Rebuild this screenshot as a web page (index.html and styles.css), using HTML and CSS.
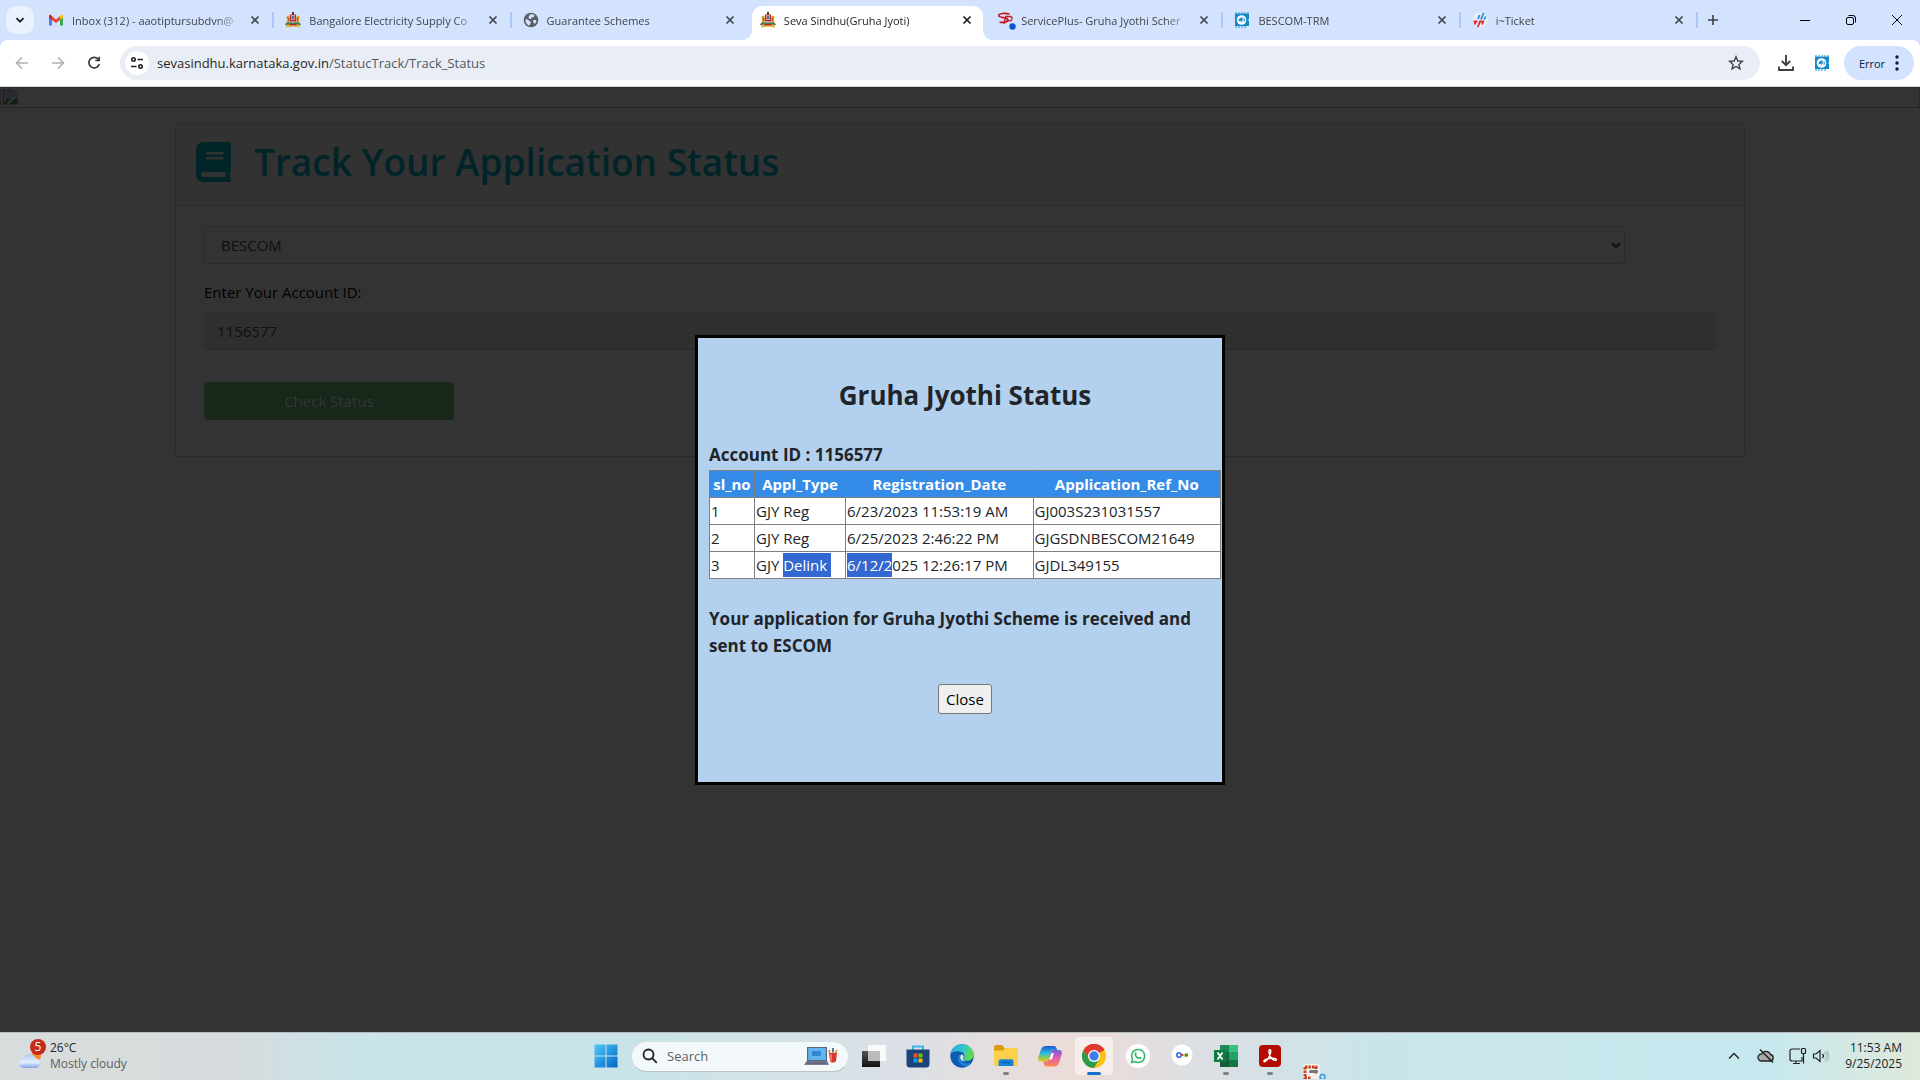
FILE: index.html
```html
<!DOCTYPE html>
<html lang="en">
<head>
    <meta charset="UTF-8">
    <meta name="viewport" content="width=device-width, initial-scale=1">
    <title>Seva Sindhu(Gruha Jyoti)</title>
    <link rel="stylesheet" href="styles.css">
</head>
<body>
    <!-- shared icons -->
    <svg class="sprite" aria-hidden="true">
        <symbol id="i-x" viewBox="0 0 10 10"><path d="M1.5 1.5l7 7M8.5 1.5l-7 7" stroke="currentColor" stroke-width="1.7" fill="none"/></symbol>
        <symbol id="i-emblem" viewBox="0 0 16 16">
            <path d="M7 0h2v3H7z" fill="#4a3a28"/>
            <path d="M5 2.5h6l.6 7H4.400z" fill="#c3272b"/>
            <path d="M6.500 3h3v5h-3z" fill="#f4ead2"/>
            <path d="M7.200 3.500h1.600v4H7.200z" fill="#31509a"/>
            <path d="M1.500 4.500l2-1 1.300 2-.5 5-3 .5.8-3z" fill="#e0a72c"/>
            <path d="M14.500 4.500l-2-1-1.300 2 .5 5 3 .5-.8-3z" fill="#e0a72c"/>
            <path d="M2.300 5.500l1.500.8-.5 3M13.700 5.500l-1.500.8.500 3" stroke="#9c3b1d" stroke-width=".8" fill="none"/>
            <path d="M0 12.500c2-3 4.500-2 8-2s6 -1 8 2l-2 1.500H2z" fill="#4c7a54"/>
            <path d="M2 12.500h12l1 3.200c-4-1.200-10-1.200-14 0z" fill="#e2b23c"/>
            <path d="M4.500 12h7v1.300h-7z" fill="#b52a26"/>
        </symbol>
        <symbol id="i-bescom" viewBox="0 0 16 16">
            <path d="M1 1.500h14v12.500H1z" fill="#1489c9"/>
            <path d="M2 0v2M5 0v2M8 0v2M11 0v2M14 0v2M2 14v2M5 14v2M8 14v2M11 14v2" stroke="#58b3de" stroke-width="1.400"/>
            <circle cx="7.500" cy="8" r="4.800" fill="#fff"/>
            <path d="M4.500 9.500c0-3 2-4.500 4.500-4l-1 2h1.500l-3 3.500.6-2.500zM9.700 5.500c1.500 1 1.500 3.500 0 5" fill="#1489c9"/>
            <path d="M16 6.500v3l-2-1.500z" fill="#fff"/>
        </symbol>
    </svg>

    <header class="browser">
        <div class="tabstrip">
            <button class="tab-search" aria-label="Search tabs"><svg width="12" height="12" viewBox="0 0 12 12"><path d="M2.500 4.200L6 7.700l3.500-3.500" stroke="#1f1f1f" stroke-width="1.800" fill="none"/></svg></button>
            <div class="tabs">
                <div class="tab">
                    <svg class="favicon" viewBox="0 0 16 16"><path d="M1 4v9.500h3V7z" fill="#4285f4"/><path d="M15 4v9.500h-3V7z" fill="#34a853"/><path d="M12 4.500L13 3c1-.8 2-.2 2 1v1.500L12 8z" fill="#fbbc04"/><path d="M4 4.500L3 3C2 2.200 1 2.800 1 4v1.500L4 8z" fill="#c5221f"/><path d="M4 4.300l4 3.200 4-3.200V8l-4 3-4-3z" fill="#ea4335"/></svg>
                    <span class="tab-title">Inbox (312) - aaotiptursubdvn@</span>
                    <button class="tab-close" aria-label="Close tab"><svg><use href="#i-x"/></svg></button>
                </div>
                <div class="tab">
                    <svg class="favicon"><use href="#i-emblem"/></svg>
                    <span class="tab-title">Bangalore Electricity Supply Co</span>
                    <button class="tab-close" aria-label="Close tab"><svg><use href="#i-x"/></svg></button>
                </div>
                <div class="tab no-line">
                    <svg class="favicon" viewBox="0 0 16 16"><circle cx="8" cy="8" r="7.300" fill="#5b6066"/><path d="M2.500 7.500c1-.5 2.500 0 3.500 1s1.800.8 1.800 2-1 1-1 3c-2.800-.6-4.600-3-4.300-6zM7 2.500c1.500-.6 3.500-.3 4.700 1l-1.200 1.700-2 .3-.5 1.600-1.800-.3L5.500 5zM10 8.300l2.300-.6 1.300 1.500-1.500 2.600-1.600-.8z" fill="#d3e2fd"/></svg>
                    <span class="tab-title">Guarantee Schemes</span>
                    <button class="tab-close" aria-label="Close tab"><svg><use href="#i-x"/></svg></button>
                </div>
                <div class="tab active">
                    <svg class="favicon"><use href="#i-emblem"/></svg>
                    <span class="tab-title">Seva Sindhu(Gruha Jyoti)</span>
                    <button class="tab-close" aria-label="Close tab"><svg><use href="#i-x"/></svg></button>
                </div>
                <div class="tab">
                    <svg class="favicon loading" viewBox="0 0 16 16"><path d="M12.500 2C8 .8 1.500 1.200 1.700 3.800c.2 2.400 9.300 1.200 9.300 4.200 0 2-4 2.800-8.500 2.200" stroke="#c9141e" stroke-width="1.600" fill="none"/><path d="M7 12l1.700-7.500h4.500c2.700 0 2.500 4-.5 4.300H9.500" stroke="#c9141e" stroke-width="1.300" fill="none"/><circle cx="15.500" cy="14.500" r="3.200" fill="#0b57d0"/></svg>
                    <span class="tab-title">ServicePlus- Gruha Jyothi Scher</span>
                    <button class="tab-close" aria-label="Close tab"><svg><use href="#i-x"/></svg></button>
                </div>
                <div class="tab">
                    <svg class="favicon"><use href="#i-bescom"/></svg>
                    <span class="tab-title">BESCOM-TRM</span>
                    <button class="tab-close" aria-label="Close tab"><svg><use href="#i-x"/></svg></button>
                </div>
                <div class="tab">
                    <svg class="favicon" viewBox="0 0 16 16"><circle cx="8" cy="8" r="7.500" fill="#eaf0fa"/><path d="M7.500 3L6 7M11.500 1L9 7.500M13.500 4.500L12.300 7.500" stroke="#2e8fd0" stroke-width="1.900"/><path d="M4.200 9L2.500 12.500M8.200 9L5.800 15M11.500 9L10 12.500M1.500 9.500h4M7 9.500h5" stroke="#dc2f34" stroke-width="1.900"/></svg>
                    <span class="tab-title">i~Ticket</span>
                    <button class="tab-close" aria-label="Close tab"><svg><use href="#i-x"/></svg></button>
                </div>
            </div>
            <button class="new-tab" aria-label="New tab"><svg width="12" height="12" viewBox="0 0 12 12"><path d="M6 1v10M1 6h10" stroke="#3c4043" stroke-width="1.600"/></svg></button>
            <div class="window-buttons">
                <button aria-label="Minimize"><svg width="12" height="12" viewBox="0 0 12 12"><path d="M1 6.500h10" stroke="#000"/></svg></button>
                <button aria-label="Restore"><svg width="12" height="12" viewBox="0 0 12 12" fill="none" stroke="#000"><rect x="1.500" y="3.500" width="7" height="7" rx="1.500"/><path d="M3.500 1.500h4.500a2.500 2.500 0 0 1 2.500 2.500v4.500"/></svg></button>
                <button aria-label="Close"><svg width="12" height="12" viewBox="0 0 12 12"><path d="M1 1l10 10M11 1L1 11" stroke="#000"/></svg></button>
            </div>
        </div>
        <div class="toolbar">
            <button class="tool" aria-label="Back"><svg width="16" height="16" viewBox="0 0 16 16" fill="none" stroke="#b0b3b6" stroke-width="1.600"><path d="M14 8H3M8 2.500L2.500 8 8 13.500"/></svg></button>
            <button class="tool" aria-label="Forward"><svg width="16" height="16" viewBox="0 0 16 16" fill="none" stroke="#b0b3b6" stroke-width="1.600"><path d="M2 8h11M8 2.500L13.500 8 8 13.500"/></svg></button>
            <button class="tool" aria-label="Reload"><svg width="16" height="16" viewBox="0 0 16 16" fill="none" stroke="#3c4043" stroke-width="1.700"><path d="M12.500 4.500A5.300 5.300 0 1 0 13.300 9M13.200 1.800v3.700H9.300"/></svg></button>
            <div class="omnibox">
                <button class="site-info" aria-label="View site information"><svg width="14" height="14" viewBox="0 0 14 14" fill="none" stroke="#1f1f1f" stroke-width="1.600"><circle cx="3.500" cy="3.500" r="1.700"/><path d="M7.500 3.500H13M1 10.500h5.500"/><circle cx="10.500" cy="10.500" r="1.700"/></svg></button>
                <a class="url" href="#">sevasindhu.karnataka.gov.in<span>/StatucTrack/Track_Status</span></a>
                <button class="star" aria-label="Bookmark this tab"><svg width="16" height="16" viewBox="0 0 16 16"><path d="M8 1.800l1.800 4.200 4.500.4-3.400 3 1 4.400L8 11.500l-3.900 2.300 1-4.400-3.400-3L6.200 6z" fill="none" stroke="#3c4043" stroke-width="1.400"/></svg></button>
            </div>
            <button class="tool" aria-label="Downloads"><svg width="18" height="18" viewBox="0 0 18 18" fill="none" stroke="#3c4043" stroke-width="1.900"><path d="M9 1v10M4.800 7L9 11.200 13.200 7M2 12.500V16h14v-3.500"/></svg></button>
            <button class="tool" aria-label="BESCOM extension"><svg width="16" height="16"><use href="#i-bescom"/></svg></button>
            <button class="error-pill">Error <svg width="4" height="16" viewBox="0 0 4 16" fill="#041e49"><circle cx="2" cy="2" r="1.700"/><circle cx="2" cy="8" r="1.700"/><circle cx="2" cy="14" r="1.700"/></svg></button>
        </div>
    </header>

    <main class="page">
        <div class="banner">
            <svg width="16" height="16" viewBox="0 0 16 16"><path d="M1 1h10l4 4v10H1z" fill="#c5d9f5" stroke="#8b8b8b"/><path d="M1 15l5-6 4 3 5-5v8z" fill="#46a049"/><path d="M5 15.500L15.500 6" stroke="#fff" stroke-width="2"/></svg>
        </div>
        <section class="card">
            <div class="card-header">
                <svg class="book" viewBox="0 0 448 512"><path fill="currentColor" d="M448 360V24c0-13.300-10.700-24-24-24H96C43 0 0 43 0 96v320c0 53 43 96 96 96h328c13.300 0 24-10.700 24-24v-16c0-7.500-3.500-14.300-8.900-18.700-4.200-15.400-4.200-59.300 0-74.700 5.400-4.300 8.900-11.100 8.900-18.600zM128 134c0-3.300 2.700-6 6-6h212c3.300 0 6 2.700 6 6v20c0 3.300-2.700 6-6 6H134c-3.300 0-6-2.700-6-6v-20zm0 64c0-3.300 2.700-6 6-6h212c3.300 0 6 2.700 6 6v20c0 3.300-2.700 6-6 6H134c-3.300 0-6-2.700-6-6v-20zm253.400 250H96c-17.700 0-32-14.300-32-32 0-17.600 14.400-32 32-32h285.400c-1.900 17.100-1.900 46.900 0 64z"/></svg>
                <h1>Track Your Application Status</h1>
            </div>
            <form class="card-body">
                <select class="form-control escom" aria-label="ESCOM">
                    <option>BESCOM</option>
                </select>
                <label for="account">Enter Your Account ID:</label>
                <input class="form-control" id="account" type="text" value="1156577" readonly>
                <button class="btn-check" type="button">Check Status</button>
            </form>
        </section>

        <div class="overlay">
            <div class="modal" role="dialog" aria-labelledby="modal-title">
                <h2 id="modal-title">Gruha Jyothi Status</h2>
                <p class="account">Account ID : 1156577</p>
                <table class="status">
                    <thead>
                        <tr><th class="col-no">sl_no</th><th class="col-type">Appl_Type</th><th>Registration_Date</th><th>Application_Ref_No</th></tr>
                    </thead>
                    <tbody>
                        <tr><td>1</td><td>GJY Reg</td><td>6/23/2023 11:53:19 AM</td><td>GJ003S231031557</td></tr>
                        <tr><td>2</td><td>GJY Reg</td><td>6/25/2023 2:46:22 PM</td><td>GJGSDNBESCOM21649</td></tr>
                        <tr><td>3</td><td>GJY <span class="selected">Delink&nbsp;</span></td><td><span class="selected">6/12/2</span>025 12:26:17 PM</td><td>GJDL349155</td></tr>
                    </tbody>
                </table>
                <p class="message">Your application for Gruha Jyothi Scheme is received and sent to ESCOM</p>
                <button class="btn-close" type="button">Close</button>
            </div>
        </div>
    </main>

    <footer class="taskbar">
        <button class="weather">
            <span class="weather-icon">
                <svg width="24" height="18" viewBox="0 0 24 18"><defs><linearGradient id="cloud" x1="0" y1="0" x2="0" y2="1"><stop offset="0" stop-color="#b3c8f3"/><stop offset=".6" stop-color="#e3edfd"/><stop offset="1" stop-color="#7fa3e8"/></linearGradient></defs><circle cx="18" cy="5" r="5" fill="#f08a24"/><path d="M5.500 17a5 5 0 0 1-.4-9.900A7 7 0 0 1 18 7.300 5 5 0 0 1 18.500 17z" fill="url(#cloud)"/></svg>
                <span class="badge">5</span>
            </span>
            <span class="weather-text">26°C<br><span>Mostly cloudy</span></span>
        </button>

        <nav class="apps">
            <button class="app" aria-label="Start"><svg width="24" height="24" viewBox="0 0 24 24"><defs><linearGradient id="win" x1="0" y1="0" x2="1" y2="1"><stop offset="0" stop-color="#4fc8f8"/><stop offset="1" stop-color="#0067c8"/></linearGradient></defs><path d="M.5.500h11v11H.500zM12.500.500h11v11h-11zM.5 12.500h11v11H.500zM12.500 12.500h11v11h-11z" fill="url(#win)"/></svg></button>
            <label class="search">
                <svg width="16" height="16" viewBox="0 0 16 16" fill="none" stroke="#222" stroke-width="1.800"><circle cx="6.500" cy="6.500" r="5"/><path d="M10.200 10.200l4.600 4.600"/></svg>
                <input type="text" placeholder="Search" aria-label="Search">
                <svg width="34" height="20" viewBox="0 0 34 20"><path d="M3 1h20v14H3z" fill="#59677d"/><path d="M4.200 2h17.600v12H4.200z" fill="#5fb6ee"/><path d="M8 5h9v5H8z" fill="#3289cf"/><path d="M2.500 15h21l1.500 4H0z" fill="#7d7f98"/><path d="M3 16h19M2.500 17.500h20" stroke="#565973" stroke-width=".7"/><path d="M26 8l-1-4M29 8V2M31 8l2-4" stroke="#d58c2f" stroke-width="1.600"/><path d="M29 2v4" stroke="#3e65b5" stroke-width="1.500"/><path d="M25 7h8l-1 8c-1 2-5 2-6 0z" fill="#d93732"/><path d="M27 8v7" stroke="#ff8375" stroke-width="1.500"/></svg>
            </label>
            <button class="app" aria-label="Task view"><svg width="24" height="24" viewBox="0 0 24 24"><defs><linearGradient id="dark" x1="0" y1="0" x2="0" y2="1"><stop offset="0" stop-color="#555"/><stop offset="1" stop-color="#111"/></linearGradient></defs><path d="M0 7h18v16H0z" fill="url(#dark)"/><path d="M6 1h18v16H6z" fill="#fff" opacity=".8"/><path d="M6 7h12v10H6z" fill="#bbb"/></svg></button>
            <button class="app" aria-label="Microsoft Store"><svg width="24" height="24" viewBox="0 0 24 24"><path d="M7 6V2.500h10V6" fill="none" stroke="#37b8e8" stroke-width="2"/><path d="M.5 5.500h23V20a3.500 3.500 0 0 1-3.500 3.500H4A3.500 3.500 0 0 1 .500 20z" fill="#1b4379"/><path d="M7.500 9.500h4v4h-4z" fill="#f25022"/><path d="M12.500 9.500h4v4h-4z" fill="#7fba00"/><path d="M7.500 14.500h4v4h-4z" fill="#00a4ef"/><path d="M12.500 14.500h4v4h-4z" fill="#ffb900"/></svg></button>
            <button class="app" aria-label="Edge"><svg width="24" height="24" viewBox="0 0 24 24"><defs><linearGradient id="edge" x1="0" y1="0" x2="1" y2=".3"><stop offset="0" stop-color="#2aa9e5"/><stop offset=".6" stop-color="#32c6c8"/><stop offset="1" stop-color="#67d951"/></linearGradient></defs><circle cx="12" cy="12" r="11.700" fill="#0f5bb2"/><path d="M.5 10C1.500 4 6.500.300 12 .300c6.700 0 11.700 4.700 11.700 10 0 4-3 6.500-6.700 6.500-3 0-4-1.300-3.400-2.300 2.400-3.500-.6-7.200-5-7.200C4.500 7.300 1.500 8.500.500 10z" fill="url(#edge)"/><path d="M9 10.500c-3 4.500.5 12 7 11.500 2.500-.2 4.500-1.500 6-3.500-5 2.200-11 .5-11.500-4 0-1 .2-2 .9-3z" fill="#1c83d8"/><path d="M12 10.200c1.800 1 2 2.800 1.200 4.200-.6 1 .4 2.300 2.500 2.800-4 .6-6.500-2.500-5-6z" fill="#dce8ef"/></svg></button>
            <button class="app running" aria-label="File Explorer"><svg width="24" height="24" viewBox="0 0 24 24"><path d="M0 3.500C0 2 1 1 2.500 1H8l2.500 3H22c1.200 0 2 .8 2 2v6H0z" fill="#d99a11"/><path d="M0 6.500h9L11 4h11c1.200 0 2 .8 2 2v14c0 1.200-.8 2-2 2H2c-1.200 0-2-.8-2-2z" fill="#fcd04b"/><path d="M4.500 22v-4.500c0-1.400.8-2.200 2-2.200h11c1.200 0 2 .8 2 2.200V22z" fill="#1983d8"/><path d="M7.500 18.500h9" stroke="#0d5ba8" stroke-width="1.500"/></svg></button>
            <button class="app" aria-label="Copilot"><svg width="24" height="24" viewBox="0 0 24 24"><defs><linearGradient id="cpa" x1="0" y1="0" x2="0" y2="1"><stop offset="0" stop-color="#2458c8"/><stop offset=".45" stop-color="#2cb6e8"/><stop offset=".75" stop-color="#88cc52"/><stop offset="1" stop-color="#f4bf28"/></linearGradient><linearGradient id="cpb" x1="0" y1="0" x2="0" y2="1"><stop offset="0" stop-color="#7c57e0"/><stop offset=".5" stop-color="#e55fa8"/><stop offset="1" stop-color="#f9894c"/></linearGradient></defs><path d="M8 2h8c1.500 0 2.200 1 2.700 2.500l.5 1.500h-2.500c-2 0-3 1-3.600 3l-1.500 5.500C11 17 10 17.500 8 17.500H3C.5 17.500-.3 15.500.4 13L3 5.500C3.800 3.200 5.500 2 8 2z" fill="url(#cpa)"/><path d="M16 22.500H8.500c-1.500 0-2.200-1-2.700-2.500l-.5-2.500h2.500c2 0 3-1 3.600-3L13 9c.6-2 1.500-3 3.500-3H21c2.500 0 3.300 2 2.600 4.500L21 19c-.8 2.300-2.500 3.500-5 3.500z" fill="url(#cpb)"/><path d="M13.500 9h2.500l-2 6.500h-3z" fill="#f7f4fb"/></svg></button>
            <button class="app current" aria-label="Chrome"><svg width="24" height="24" viewBox="0 0 24 24"><circle cx="12" cy="12" r="12" fill="#fbc116"/><path d="M12 12L1.600 6a12 12 0 0 1 20.800 0z" fill="#df3a2f"/><path d="M12 6h10.400a12 12 0 0 0-20.800 0L6.800 15z" fill="#df3a2f"/><path d="M1.600 6A12 12 0 0 0 12 24l5.200-9-5.200 3-5.200-3z" fill="#2c9b4b"/><circle cx="12" cy="12" r="6" fill="#fff"/><circle cx="12" cy="12" r="4.700" fill="#3b7ded"/></svg></button>
            <button class="app" aria-label="WhatsApp"><svg width="24" height="24" viewBox="0 0 24 24"><circle cx="12" cy="12" r="12" fill="#fff"/><path d="M5.500 18.500l1-3.400A6.500 6.500 0 1 1 9 17.600z" fill="none" stroke="#2fb767" stroke-width="1.500"/><path d="M9 8.500c1-1 1.500.5 1.700 1.200.2.500-.6.800-.5 1.200.5 1.200 1.500 2 2.700 2.500.500.100.800-.900 1.300-.7.700.3 2 .7 1 1.700C12.500 17 7 11.500 9 8.500z" fill="#2fb767"/></svg></button>
            <button class="app" aria-label="Password Manager"><svg width="24" height="24" viewBox="0 0 24 24"><circle cx="12" cy="11" r="10.500" fill="#fff"/><circle cx="9" cy="11" r="2.200" fill="none" stroke="#4477e0" stroke-width="1.800"/><path d="M11 11h3" stroke="#d93a2f" stroke-width="2"/><path d="M13 11h2.500v2" stroke="#f2b91d" stroke-width="2" fill="none"/><path d="M15 9.500h3v3h-3z" fill="#2b9950"/></svg></button>
            <button class="app running" aria-label="Excel"><svg width="24" height="24" viewBox="0 0 24 24"><path d="M6 1h17c.6 0 1 .4 1 1v20c0 .600-.4 1-1 1H7c-.6 0-1-.4-1-1z" fill="#21a366"/><path d="M6 1h9v7H6z" fill="#1c8c54"/><path d="M15 1h8c.6 0 1 .4 1 1v6h-9z" fill="#39bf81"/><path d="M6 8h9v8H6z" fill="#12663b"/><path d="M15 16h9v6c0 .600-.4 1-1 1h-8z" fill="#137643"/><path d="M6 16h9v7H7c-.6 0-1-.4-1-1z" fill="#185c37"/><path d="M0 6h12v12H0z" fill="#107c41"/><path d="M3.500 8.500l5 7M8.500 8.500l-5 7" stroke="#fff" stroke-width="1.800"/></svg></button>
            <button class="app running" aria-label="Acrobat"><svg width="24" height="24" viewBox="0 0 24 24"><rect x="1" y="1" width="22" height="22" rx="4" fill="#b30b00"/><path d="M6 17.500c-.6-1.500 4-3.500 9-3.200 4.500.3 4 2.500 1.500 2-3-.7-6-5.500-5.500-9.500.3-1.800 2-1.500 1.800.5-.4 4.200-4 11.500-6.800 10.200z" fill="none" stroke="#fff" stroke-width="1.400"/></svg></button>
            <button class="app snip" aria-label="Snipping Tool"><svg width="24" height="15" viewBox="0 0 24 15"><rect x="1" width="17" height="15" rx="2" fill="#f4f1ef"/><path d="M3 3h11v7M3 3v11h6" fill="none" stroke="#c8401c" stroke-width="3" stroke-dasharray="2.500 1"/><rect x="7" y="6" width="9" height="3" rx="1.500" fill="#777"/><circle cx="20.500" cy="13" r="2.500" fill="none" stroke="#2f9ede" stroke-width="1.500"/></svg></button>
        </nav>

        <div class="tray">
            <button aria-label="Show hidden icons"><svg width="12" height="12" viewBox="0 0 12 12"><path d="M1 8.500l5-5 5 5" fill="none" stroke="#222" stroke-width="1.400"/></svg></button>
            <button class="onedrive" aria-label="OneDrive"><svg width="18" height="16" viewBox="0 0 18 16"><path d="M4.500 13a3.500 3.500 0 0 1 0-7 5 5 0 0 1 9 .500A3.300 3.300 0 0 1 13.500 13z" fill="#aaa" stroke="#222" stroke-width="1.300"/><path d="M3 1.500l13 13" stroke="#222" stroke-width="1.500"/></svg></button>
            <button class="net" aria-label="Network and volume">
                <svg width="18" height="18" viewBox="0 0 18 18" fill="none" stroke="#222" stroke-width="1.200"><path d="M11 2H3a2 2 0 0 0-2 2v8a2 2 0 0 0 2 2h10V10M7 14v2.500M4 16.500h7"/><rect x="12.500" y="1.500" width="4" height="5" rx="1"/><path d="M14.500 6.500v10"/></svg>
                <svg width="18" height="16" viewBox="0 0 18 16" fill="none" stroke="#222" stroke-width="1.200"><path d="M1.500 6v4H4l4 3.500v-11L4 6z"/><path d="M10.500 6a3 3 0 0 1 0 4"/><path d="M12.500 4a6 6 0 0 1 0 8M14.500 2.500a8.500 8.500 0 0 1 0 11" stroke="#9bb"/></svg>
            </button>
            <button class="clock">11:53 AM<br>9/25/2025</button>
        </div>
    </footer>
</body>
</html>
```
FILE: styles.css
```css
* {
    box-sizing: border-box;
}
body {
    margin: 0;
    height: 100vh;
    display: flex;
    flex-direction: column;
    overflow: hidden;
    font-family: "Open Sans", "Noto Sans", sans-serif;
    font-size: 15px;
    color: #212529;
}
button, input, select {
    font-family: inherit;
    font-size: inherit;
    color: inherit;
}
svg {
    flex: none;
    display: block;
}
.sprite {
    position: absolute;
    width: 0;
    height: 0;
}

/* browser window */
.browser {
    background-color: #d3e2fd;
    font-size: 11px;
}
.browser button, .taskbar button {
    border: 0;
    padding: 0;
    background-color: transparent;
    display: flex;
    align-items: center;
    justify-content: center;
}
.tabstrip {
    height: 40px;
    display: flex;
    align-items: center;
    padding-left: 6px;
}
.browser .tab-search {
    width: 28px;
    height: 28px;
    border-radius: 10px;
    background-color: #e9f0fe;
}
.tabs {
    flex: 0 1 1655px;
    min-width: 0;
    height: 34px;
    margin: 6px 4px 0 6px;
    display: flex;
    gap: 6px;
}
.tab {
    position: relative;
    flex: 1 1 0;
    min-width: 0;
    height: 34px;
    padding: 0 11px 6px 8px;
    display: flex;
    align-items: center;
    gap: 8px;
    color: #40454b;
}
.tab::after {
    content: "";
    position: absolute;
    right: -3px;
    top: 6px;
    width: 2px;
    height: 16px;
    background-color: #a8c7fa;
}
.tab.no-line::after {
    display: none;
}
.tab.active {
    background-color: #fff;
    border-radius: 10px 10px 0 0;
    color: #1f1f1f;
}
/* curved feet of the active tab */
.tab.active::before, .tab.active::after {
    content: "";
    position: absolute;
    top: auto;
    bottom: 0;
    width: 10px;
    height: 10px;
}
.tab.active::before {
    left: -10px;
    background: radial-gradient(circle at 0 0, transparent 10px, #fff 10px);
}
.tab.active::after {
    right: -10px;
    background: radial-gradient(circle at 100% 0, transparent 10px, #fff 10px);
}
.favicon {
    width: 16px;
    height: 16px;
    overflow: visible;
}
.tab-title {
    flex: 1;
    overflow: hidden;
    white-space: nowrap;
    -webkit-mask-image: linear-gradient(to right, #000 85%, transparent);
    mask-image: linear-gradient(to right, #000 85%, transparent);
}
.tab-close svg {
    width: 10px;
    height: 10px;
}
.browser .new-tab {
    width: 28px;
    height: 28px;
}
.window-buttons {
    margin-left: auto;
    display: flex;
}
.window-buttons button {
    width: 46px;
    height: 40px;
}
.toolbar {
    height: 47px;
    padding: 0 6px 0 4px;
    border-bottom: 1px solid #dadce0;
    border-radius: 8px 8px 0 0;
    background-color: #fff;
    display: flex;
    align-items: center;
}
.browser .tool {
    width: 36px;
    height: 34px;
}
.omnibox {
    flex: 1;
    height: 34px;
    margin: 0 8px;
    padding: 0 16px 0 5px;
    border-radius: 17px;
    background-color: #e9eef6;
    display: flex;
    align-items: center;
}
.browser .site-info {
    width: 24px;
    height: 24px;
    border-radius: 12px;
    background-color: #fff;
}
.url {
    flex: 1;
    margin-left: 8px;
    font-size: 13px;
    color: #1f1f1f;
    text-decoration: none;
}
.url span {
    color: #54595f;
}
.browser .error-pill {
    width: 70px;
    height: 34px;
    margin-left: 4px;
    gap: 10px;
    border-radius: 17px;
    background-color: #d3e2fd;
    color: #041e49;
}

/* page */
.page {
    position: relative;
    flex: 1;
    min-height: 0;
    background-color: #fff;
}
.banner {
    height: 21px;
    padding: 1px;
    border: 1px solid #c0c0c0;
}
.card {
    margin: 16px 175px;
    border: 1px solid #d0d0d0;
    border-radius: 4px;
}
.card-header {
    height: 81px;
    padding: 0 20px 6px;
    border-bottom: 1px solid #d0d0d0;
    background-color: #f7f7f7;
    display: flex;
    align-items: center;
    gap: 23px;
    color: #08b4ce;
}
.card-header h1 {
    margin: 0;
    font-size: 37px;
    font-weight: 600;
    line-height: 48px;
}
.book {
    width: 35px;
    height: 40px;
}
.card-body {
    padding: 20px 28px 36px;
    display: flex;
    flex-direction: column;
    align-items: flex-start;
}
.card-body label {
    margin: 16px 0 8px;
    line-height: 24px;
    color: #000;
}
.form-control {
    width: 100%;
    height: 38px;
    padding: 6px 12px;
    border: 1px solid #ced4da;
    border-radius: 4px;
    background-color: #e9ecef;
    color: #495057;
}
.escom {
    width: 94%;
    background-color: #fff;
}
.btn-check {
    width: 250px;
    height: 38px;
    margin-top: 32px;
    border: 0;
    border-radius: 4px;
    background-color: #28a745;
    color: #fff;
    opacity: 0.65;
}

/* status dialog */
.overlay {
    position: absolute;
    inset: 0;
    background-color: rgba(0, 0, 0, 0.8);
    display: flex;
    align-items: center;
    justify-content: center;
}
.modal {
    width: 530px;
    min-height: 450px;
    padding: 36px 1px 64px 11px;
    border: 3px solid #000;
    background-color: #b3d1ef;
    display: flex;
    flex-direction: column;
}
.modal h2 {
    margin: 0 0 25px;
    font-size: 26px;
    font-weight: 700;
    line-height: 42px;
    text-align: center;
}
.account, .message {
    margin: 0;
    font-size: 17px;
    font-weight: 700;
    line-height: 27px;
}
.status {
    width: 100%;
    margin: 2px 0 26px;
    border-collapse: collapse;
    table-layout: fixed;
    background-color: #fff;
}
.status th, .status td {
    height: 27px;
    padding: 0 1px;
    border: 1px solid #808080;
    line-height: 24px;
    text-align: left;
    white-space: nowrap;
}
.status th {
    background-color: #348ce8;
    color: #fff;
    text-align: center;
}
.col-no {
    width: 45px;
}
.col-type {
    width: 91px;
}
.selected {
    display: inline-block;
    background-color: #3367d1;
    color: #fff;
}
.btn-close {
    align-self: center;
    width: 54px;
    height: 30px;
    margin-top: 25px;
    padding: 0;
    border: 1px solid #767676;
    border-radius: 3px;
    background-color: #efefef;
    color: #000;
}

/* taskbar */
.taskbar {
    height: 48px;
    padding: 0 18px 2px;
    border-top: 1px solid #b5bdbf;
    background: linear-gradient(to right, #d9dcdd 0%, #d6dcdd 12%, #c9e4ea 19%, #c9e4e8 33%, #dbe0e6 47%, #ecdcd8 56%, #dadfe3 63%, #c9e5ea 72%, #c7e8ef 92%, #dfe9da 100%);
    display: grid;
    grid-template-columns: 1fr auto 1fr;
    align-items: center;
    font-size: 12px;
}
.taskbar .weather {
    justify-self: start;
    gap: 8px;
    text-align: left;
    line-height: 16px;
}
.weather-icon {
    position: relative;
    padding-top: 8px;
}
.weather-text span {
    color: #5a5f62;
}
.badge {
    position: absolute;
    left: 12px;
    top: -4px;
    width: 16px;
    height: 16px;
    border-radius: 8px;
    background-color: #c42b1c;
    color: #fff;
    text-align: center;
}
.apps {
    display: flex;
    align-items: center;
}
.taskbar .app {
    position: relative;
    width: 38px;
    height: 38px;
    margin: 0 3px;
    border-radius: 4px;
}
.taskbar .current {
    background-color: #f5eeec;
}
.running::after, .current::after {
    content: "";
    position: absolute;
    bottom: 0;
    left: 16px;
    width: 6px;
    height: 3px;
    border-radius: 2px;
    background-color: #7d8082;
}
.current::after {
    left: 12px;
    width: 14px;
    background-color: #1670c8;
}
.taskbar .snip {
    align-items: flex-end;
    height: 46px;
}
.search {
    width: 218px;
    height: 31px;
    margin: 0 3px;
    padding: 0 10px;
    border: 1px solid #d3dfe2;
    border-bottom-color: #b9c6c9;
    border-radius: 16px;
    background-color: #f3f8fa;
    display: flex;
    align-items: center;
    gap: 9px;
}
.search input {
    flex: 1;
    min-width: 0;
    padding: 0;
    border: 0;
    outline: 0;
    background-color: transparent;
    font-size: 13px;
}
.search input::placeholder {
    color: #5d6163;
}
.tray {
    justify-self: end;
    display: flex;
    align-items: center;
}
.tray .onedrive {
    margin-left: 17px;
}
.tray .net {
    margin-left: 14px;
    gap: 5px;
}
.tray .clock {
    width: 72px;
    justify-content: flex-end;
    text-align: right;
    line-height: 16px;
}
```
